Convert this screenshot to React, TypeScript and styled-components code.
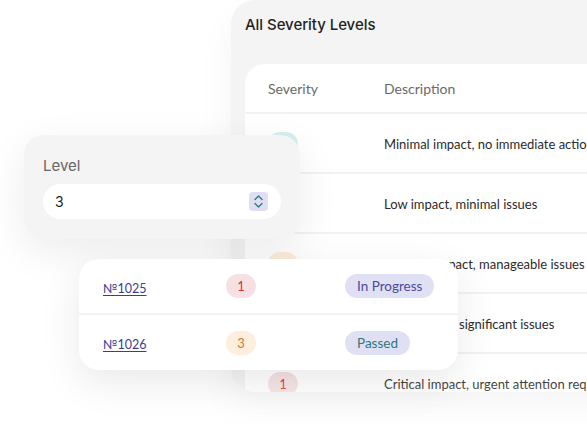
import React from "react";
import styled, { createGlobalStyle } from "styled-components";

const Global = createGlobalStyle`
  html, body { margin: 0; padding: 0; background: #ffffff; }
  body { font-family: "Source Sans Pro", "Lato", "Noto Sans", sans-serif; }
  * { box-sizing: border-box; }
`;

const Stage = styled.div`
  position: relative;
  width: 587px;
  height: 424px;
  overflow: hidden;
  background: #ffffff;
`;

const BackCard = styled.section`
  position: absolute;
  left: 231px;
  top: 0;
  width: 420px;
  height: 392px;
  background: #f4f4f4;
  border-radius: 24px;
  padding: 14px 0 0 14px;
  overflow: hidden;
  display: flex;
  flex-direction: column;
  box-shadow: 0 18px 36px rgba(0, 0, 0, 0.05);
`;

const Title = styled.h2`
  margin: 0;
  height: 22px;
  font-family: "Inter", "Open Sans", sans-serif;
  font-weight: 500;
  font-size: 15px;
  line-height: 22px;
  color: #1f1f1f;
  letter-spacing: -0.05px;
`;

const Table = styled.div`
  margin-top: 28px;
  background: #ffffff;
  border-radius: 20px 0 0 0;
  display: flex;
  flex-direction: column;
  flex: 1;
`;

const HeadRow = styled.div`
  display: grid;
  grid-template-columns: 116px 1fr;
  align-items: center;
  height: 50px;
  flex: none;
  padding-left: 23px;
  border-bottom: 2px solid #f2f2f2;
  font-family: "Lato", "Noto Sans", sans-serif;
  font-size: 14px;
  color: #6a6a6a;
`;

const BodyRow = styled.div`
  display: grid;
  grid-template-columns: 116px 1fr;
  align-items: center;
  height: 60px;
  flex: none;
  padding-left: 23px;
  padding-top: 2px;
  border-bottom: 2px solid #f2f2f2;
  font-family: "Lato", "Noto Sans", sans-serif;
  font-size: 13px;
  color: #2b2b2b;
  white-space: nowrap;
`;

const tones = {
  teal: { bg: "#d2f0ef", fg: "#2a8a86" },
  green: { bg: "#dcf2e4", fg: "#2e8a4e" },
  orange: { bg: "#fdeedd", fg: "#d9782e" },
  yellow: { bg: "#fdf2d6", fg: "#c98d1a" },
  red: { bg: "#f5e1e3", fg: "#e0302e" },
} as const;

type Tone = keyof typeof tones;

const Badge = styled.span<{ $tone: Tone }>`
  display: inline-flex;
  align-items: center;
  justify-content: center;
  width: 30px;
  height: 24px;
  border-radius: 12px;
  background: ${(p) => tones[p.$tone].bg};
  color: ${(p) => tones[p.$tone].fg};
  font-family: "Lato", "Noto Sans", sans-serif;
  font-size: 13px;
`;

const LevelCard = styled.div`
  position: absolute;
  left: 24px;
  top: 135px;
  width: 276px;
  height: 104px;
  background: #f4f4f4;
  border-radius: 20px;
  padding: 20px 19px 0 19px;
  display: flex;
  flex-direction: column;
  gap: 8px;
  box-shadow: 0 12px 40px rgba(0, 0, 0, 0.08);
`;

const Label = styled.label`
  font-family: "Inter", "Open Sans", sans-serif;
  font-size: 15px;
  line-height: 21px;
  color: #666666;
`;

const InputBox = styled.div`
  height: 35px;
  background: #ffffff;
  border-radius: 18px;
  display: flex;
  align-items: center;
  justify-content: space-between;
  padding: 0 13px 0 12px;
  font-family: "Inter", "Open Sans", sans-serif;
  font-size: 14px;
  color: #1f1f1f;
`;

const Stepper = styled.span`
  width: 19px;
  height: 19px;
  border-radius: 4px;
  background: #dfdff3;
  display: inline-flex;
  align-items: center;
  justify-content: center;
`;

const OrdersCard = styled.div`
  position: absolute;
  left: 79px;
  top: 259px;
  width: 379px;
  height: 111px;
  background: #ffffff;
  border-radius: 20px;
  display: flex;
  flex-direction: column;
  box-shadow: 0 12px 40px rgba(0, 0, 0, 0.09);
`;

const OrderRow = styled.div<{ $last?: boolean }>`
  display: grid;
  grid-template-columns: 123px 119px 1fr;
  align-items: center;
  height: ${(p) => (p.$last ? "55px" : "56px")};
  padding-left: 24px;
  border-bottom: ${(p) => (p.$last ? "none" : "2px solid #f2f2f2")};
`;

const OrderLink = styled.a`
  font-family: "Lato", "Noto Sans", sans-serif;
  font-size: 12.5px;
  color: #3d3d8f;
  text-decoration: underline;
  text-underline-offset: 2px;
`;

const Status = styled.span<{ $color: string }>`
  justify-self: start;
  display: inline-flex;
  align-items: center;
  height: 24px;
  padding: 0 12px;
  border-radius: 12px;
  background: #e0e0f5;
  color: ${(p) => p.$color};
  font-family: "Lato", "Noto Sans", sans-serif;
  font-size: 13.5px;
`;

const Fade = styled.div`
  position: absolute;
  left: 0;
  right: 0;
  bottom: 0;
  height: 50px;
  background: linear-gradient(to bottom, rgba(255,255,255,0), rgba(255,255,255,0.55));
  pointer-events: none;
`;

const rows: { n: number; tone: Tone; text: string }[] = [
  { n: 5, tone: "teal", text: "Minimal impact, no immediate action required" },
  { n: 4, tone: "green", text: "Low impact, minimal issues" },
  { n: 3, tone: "orange", text: "Medium impact, manageable issues" },
  { n: 2, tone: "yellow", text: "High impact, significant issues" },
  { n: 1, tone: "red", text: "Critical impact, urgent attention required" },
];

export default function App() {
  return (
    <>
      <Global />
      <Stage>
        <BackCard>
          <Title>All Severity Levels</Title>
          <Table>
            <HeadRow>
              <span>Severity</span>
              <span>Description</span>
            </HeadRow>
            {rows.map((r) => (
              <BodyRow key={r.n}>
                <span>
                  <Badge $tone={r.tone}>{r.n}</Badge>
                </span>
                <span>{r.text}</span>
              </BodyRow>
            ))}
          </Table>
        </BackCard>
        <Fade />
        <LevelCard>
          <Label>Level</Label>
          <InputBox>
            <span>3</span>
            <Stepper>
              <svg width="11" height="15" viewBox="0 0 11 15" fill="none">
                <path d="M2 5.5 L5.5 2 L9 5.5" stroke="#2a7a7a" strokeWidth="1.3" strokeLinecap="round" strokeLinejoin="round" />
                <path d="M2 9.5 L5.5 13 L9 9.5" stroke="#2a7a7a" strokeWidth="1.3" strokeLinecap="round" strokeLinejoin="round" />
              </svg>
            </Stepper>
          </InputBox>
        </LevelCard>
        <OrdersCard>
          <OrderRow>
            <span><OrderLink href="#">№1025</OrderLink></span>
            <span><Badge $tone="red">1</Badge></span>
            <Status $color="#4a4a9a">In Progress</Status>
          </OrderRow>
          <OrderRow $last>
            <span><OrderLink href="#">№1026</OrderLink></span>
            <span><Badge $tone="orange">3</Badge></span>
            <Status $color="#2a7a7a">Passed</Status>
          </OrderRow>
        </OrdersCard>
      </Stage>
    </>
  );
}
